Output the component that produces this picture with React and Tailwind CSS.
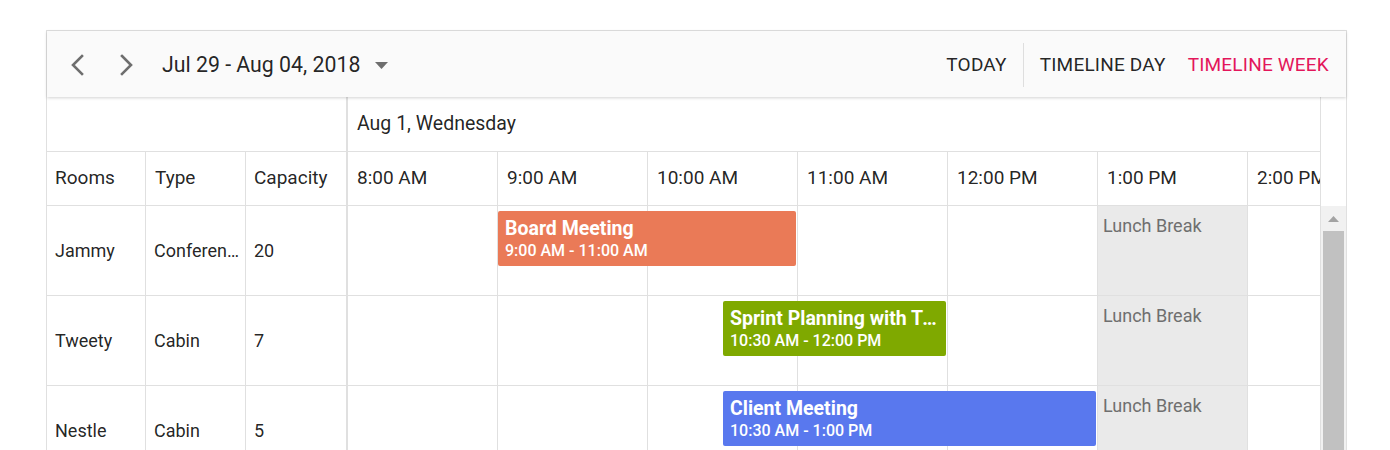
import React from "react";

const hours = ["8:00 AM", "9:00 AM", "10:00 AM", "11:00 AM", "12:00 PM", "1:00 PM", "2:00 PM"];

const rooms = [
  {
    name: "Jammy",
    type: "Conference",
    capacity: 20,
    event: {
      title: "Board Meeting",
      time: "9:00 AM - 11:00 AM",
      pos: "left-[150px] w-[298px]",
      color: "bg-[#ea7a57]",
    },
  },
  {
    name: "Tweety",
    type: "Cabin",
    capacity: 7,
    event: {
      title: "Sprint Planning with Team members",
      time: "10:30 AM - 12:00 PM",
      pos: "left-[375px] w-[223px]",
      color: "bg-[#7fa900]",
    },
  },
  {
    name: "Nestle",
    type: "Cabin",
    capacity: 5,
    event: {
      title: "Client Meeting",
      time: "10:30 AM - 1:00 PM",
      pos: "left-[375px] w-[373px]",
      color: "bg-[#5978ee]",
    },
  },
];

function Chevron({ dir }) {
  return (
    <svg width="16" height="24" viewBox="0 0 16 24" fill="none">
      <polyline
        points={dir === "left" ? "13,3 4,12 13,21" : "3,3 12,12 3,21"}
        stroke="#6e6e6e"
        strokeWidth="2.6"
        strokeLinecap="square"
      />
    </svg>
  );
}

function Toolbar() {
  return (
    <div className="relative z-10 flex h-[66px] items-center bg-[#fafafa] pt-[2px] shadow-[0_1px_3px_rgba(0,0,0,0.18)] text-[rgba(0,0,0,0.87)]">
      <div className="ml-[22px] flex items-center">
        <Chevron dir="left" />
        <div className="w-[34px]" />
        <Chevron dir="right" />
        <span className="ml-[27px] text-[21.3px]">Jul 29 - Aug 04, 2018</span>
        <svg className="ml-[15px] mt-[1px]" width="13" height="7" viewBox="0 0 13 7">
          <polygon points="0,0 13,0 6.5,7" fill="#6e6e6e" />
        </svg>
      </div>
      <div className="ml-auto mr-[17px] flex items-center text-[19px] tracking-[0.2px]">
        <span>TODAY</span>
        <div className="mx-[16px] h-[44px] w-px bg-[#dedede]" />
        <span>TIMELINE DAY</span>
        <span className="ml-[22px] text-[#e3165b]">TIMELINE WEEK</span>
      </div>
    </div>
  );
}

function HeaderRows() {
  return (
    <div className="flex">
      {/* resource header */}
      <div className="flex w-[301px] flex-col">
        <div className="h-[55px] border-b border-r-2 border-[#e0e0e0]" />
        <div className="flex h-[54px] border-b border-[#e0e0e0] text-[19px]">
          <div className="flex w-[99px] items-center border-r border-[#e0e0e0] pl-[8px]">Rooms</div>
          <div className="flex w-[100px] items-center border-r border-[#e0e0e0] pl-[9px]">Type</div>
          <div className="flex w-[102px] items-center border-r-2 border-[#e0e0e0] pl-[8px]">Capacity</div>
        </div>
      </div>
      {/* time header */}
      <div className="w-[973px] overflow-hidden border-r border-[#e0e0e0]">
        <div className="flex h-[55px] items-center border-b border-[#e0e0e0] pl-[9px] text-[19.5px]">
          Aug 1, Wednesday
        </div>
        <div className="flex h-[54px] border-b border-[#e0e0e0] text-[19px]">
          {hours.map((h) => (
            <div
              key={h}
              className="flex w-[150px] shrink-0 items-center border-r border-[#e0e0e0] pl-[9px] whitespace-nowrap"
            >
              {h}
            </div>
          ))}
        </div>
      </div>
      <div className="w-[25px]" />
    </div>
  );
}

function EventCard({ event }) {
  return (
    <div
      className={`absolute top-[5px] h-[55px] rounded-[2px] px-[7px] pt-[6px] text-white ${event.pos} ${event.color}`}
    >
      <div className="truncate text-[19.5px] font-bold leading-[23px]">{event.title}</div>
      <div className="truncate text-[16px] font-medium leading-[22px]">{event.time}</div>
    </div>
  );
}

function ContentRows() {
  return (
    <div className="flex">
      <div className="flex w-[1274px] flex-col">
        {rooms.map((room) => (
          <div key={room.name} className="flex h-[90px] border-b border-[#e0e0e0]">
            <div className="flex w-[301px] text-[18px]">
              <div className="flex w-[99px] items-center border-r border-[#e0e0e0] pl-[8px]">{room.name}</div>
              <div className="flex w-[100px] items-center border-r border-[#e0e0e0] pl-[8px]">
                <span className="block truncate pr-[3px]">{room.type}</span>
              </div>
              <div className="flex w-[102px] items-center border-r-2 border-[#e0e0e0] pl-[8px]">{room.capacity}</div>
            </div>
            <div className="relative flex w-[973px] overflow-hidden border-r border-[#e0e0e0]">
              {hours.map((h, i) => (
                <div
                  key={h}
                  className={`w-[150px] shrink-0 border-r border-[#e0e0e0] ${
                    i === 5 ? "bg-[#eaeaea] pl-[5px] pt-[6px] text-[18px] text-[#6f6f6f]" : ""
                  }`}
                >
                  {i === 5 ? "Lunch Break" : null}
                </div>
              ))}
              <EventCard event={room.event} />
            </div>
          </div>
        ))}
      </div>
      {/* scrollbar */}
      <div className="flex w-[25px] flex-col bg-[#f1f1f1]">
        <div className="flex h-[25px] items-center justify-center">
          <svg width="11" height="6" viewBox="0 0 11 6">
            <polygon points="0,6 11,6 5.5,0" fill="#a3a3a3" />
          </svg>
        </div>
        <div className="mx-[2px] flex-1 bg-[#c1c1c1]" />
      </div>
    </div>
  );
}

export default function App() {
  return (
    <div className="h-[450px] overflow-hidden bg-white font-['Roboto',sans-serif] text-[rgba(0,0,0,0.87)]">
      <div className="ml-[46px] mt-[30px] w-[1301px] border border-[#e0e0e0]">
        <Toolbar />
        <HeaderRows />
        <ContentRows />
      </div>
    </div>
  );
}
